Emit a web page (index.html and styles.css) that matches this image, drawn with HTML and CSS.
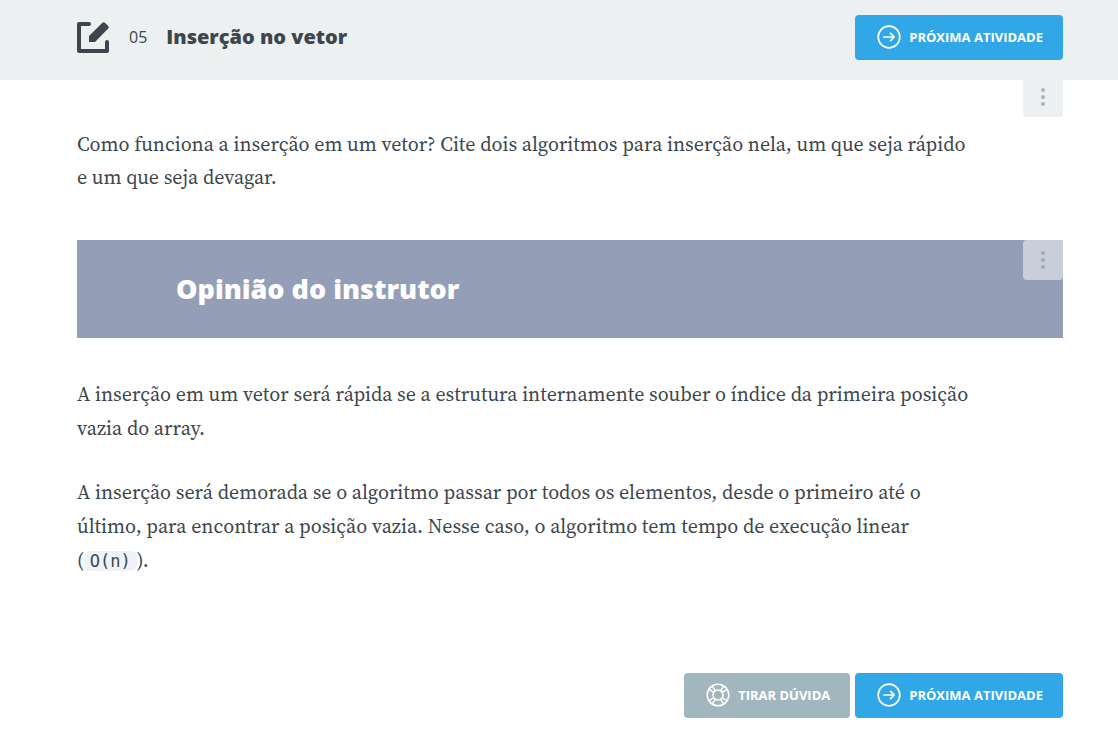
FILE: index.html
```
<!DOCTYPE html>
<html lang="pt-BR">
<head>
<meta charset="utf-8">
<meta name="viewport" content="width=device-width, initial-scale=1">
<title>Inserção no vetor</title>
<link rel="stylesheet" href="styles.css">
</head>
<body>
<svg class="sprite" aria-hidden="true">
  <symbol id="arrow" viewBox="0 0 24 24">
    <g fill="none" stroke="currentColor" stroke-linecap="round" stroke-linejoin="round">
      <circle cx="12" cy="12" r="10.8" stroke-width="1.7"/>
      <path d="M6.8 12h10M13.6 8.4l3.6 3.6-3.6 3.6" stroke-width="1.7"/>
    </g>
  </symbol>
  <symbol id="buoy" viewBox="0 0 24 24">
    <g fill="none" stroke="currentColor" stroke-width="1.5">
      <circle cx="12" cy="12" r="10.8"/>
      <circle cx="12" cy="12" r="5"/>
      <path d="M2.800 6.200l5 3.200M6.200 2.800l3.200 5M17.800 2.800l-3.200 5M21.200 6.200l-5 3.200M21.200 17.800l-5-3.200M17.800 21.200l-3.200-5M6.200 21.200l3.200-5M2.800 17.800l5-3.200"/>
    </g>
  </symbol>
  <symbol id="dots" viewBox="0 0 4 18">
    <g fill="currentColor"><circle cx="2" cy="2" r="2"/><circle cx="2" cy="9" r="2"/><circle cx="2" cy="16" r="2"/></g>
  </symbol>
</svg>
<header class="header">
  <svg class="header-icon" viewBox="0 0 32 32" aria-hidden="true">
    <path d="M12 2H2v27h28V20" fill="none" stroke="currentColor" stroke-width="4" stroke-linecap="round" stroke-linejoin="round"/>
    <path d="M12 20v-6L25.4.8q1.3-1.2 2.6 0l3.200 3.200q1.200 1.300 0 2.600L18 20z" fill="currentColor"/>
  </svg>
  <span class="header-number">05</span>
  <h1 class="header-title">Inserção no vetor</h1>
  <a class="button" href="#"><svg class="button-icon" aria-hidden="true"><use href="#arrow"/></svg>Próxima Atividade</a>
</header>
<main class="content">
  <section class="question">
    <p class="text">Como funciona a inserção em um vetor? Cite dois algoritmos para inserção nela, um que seja rápido e um que seja devagar.</p>
    <button class="menu" type="button" aria-label="Opções da pergunta"><svg class="menu-icon" aria-hidden="true"><use href="#dots"/></svg></button>
  </section>
  <section>
    <div class="banner">
      <h2 class="banner-title">Opinião do instrutor</h2>
      <button class="menu menu-banner" type="button" aria-label="Opções da opinião"><svg class="menu-icon" aria-hidden="true"><use href="#dots"/></svg></button>
    </div>
    <div class="answer">
      <p class="text">A inserção em um vetor será rápida se a estrutura internamente souber o índice da primeira posição vazia do array.</p>
      <p class="text">A inserção será demorada se o algoritmo passar por todos os elementos, desde o primeiro até o último, para encontrar a posição vazia. Nesse caso, o algoritmo tem tempo de execução linear (<code class="code">O(n)</code>).</p>
    </div>
  </section>
  <footer class="actions">
    <button class="button button-muted" type="button"><svg class="button-icon" aria-hidden="true"><use href="#buoy"/></svg>Tirar Dúvida</button>
    <a class="button" href="#"><svg class="button-icon" aria-hidden="true"><use href="#arrow"/></svg>Próxima Atividade</a>
  </footer>
</main>
</body>
</html>
```
FILE: styles.css
```
* { box-sizing: border-box; }
body {
  margin: 0;
  background: #fff;
  color: #3d464d;
  font-family: "Open Sans", sans-serif;
}
h1, h2, p { margin: 0; }
.sprite { display: none; }
.header {
  display: flex;
  align-items: center;
  padding: 15px 55px 20px 77px;
  background: #ecf0f1;
}
.header-icon { width: 32px; height: 32px; overflow: visible; }
.header-number { margin: 0 19px 0 20px; padding-bottom: 2px; font-size: 16px; line-height: 20px; }
.header-title { margin-right: auto; padding-bottom: 2px; font-size: 20px; line-height: 28px; font-weight: 800; }
.button {
  display: flex;
  align-items: center;
  gap: 8px;
  height: 45px;
  padding: 0 20px 2px 22px;
  border: 0;
  border-radius: 4px;
  background: #32a7e7;
  color: #fff;
  font: 700 13px/18px "Open Sans", sans-serif;
  text-transform: uppercase;
  text-decoration: none;
  cursor: pointer;
}
.button-muted { background: #a2b6be; }
.button-icon { width: 24px; height: 24px; }
.content { padding: 0 55px 38px 77px; }
.question {
  display: flex;
  align-items: flex-start;
  justify-content: space-between;
  padding-bottom: 46px;
}
.text {
  flex: 0 1 900px;
  max-width: 900px;
  font-family: "Source Serif Pro", "Source Serif 4", "Liberation Serif", serif;
  font-size: 20px;
  line-height: 34px;
}
.question .text { padding-top: 48px; line-height: 33px; }
.menu {
  display: flex;
  align-items: center;
  justify-content: center;
  width: 40px;
  height: 37px;
  padding: 0 0 3px;
  border: 0;
  border-radius: 0 0 4px 4px;
  background: #ecf0f1;
  color: #a2b6be;
  cursor: pointer;
}
.menu-icon { width: 4px; height: 18px; }
.banner {
  display: flex;
  align-items: flex-start;
  justify-content: space-between;
  min-height: 98px;
  background: #949eb6;
}
.banner-title { padding: 30px 0 30px 99px; color: #fff; font-size: 27px; line-height: 38px; font-weight: 800; }
.menu-banner { height: 40px; padding: 0; border-radius: 4px 0 4px 4px; background: #c8cfda; color: #9dadb9; }
.answer { display: grid; gap: 30px; padding: 39px 0 96px; }
.code {
  padding: 0 6px;
  border-radius: 6px;
  background: #eff3f7;
  font: 17px/24px "DejaVu Sans Mono", monospace;
}
.actions { display: flex; justify-content: flex-end; gap: 5px; }
```
